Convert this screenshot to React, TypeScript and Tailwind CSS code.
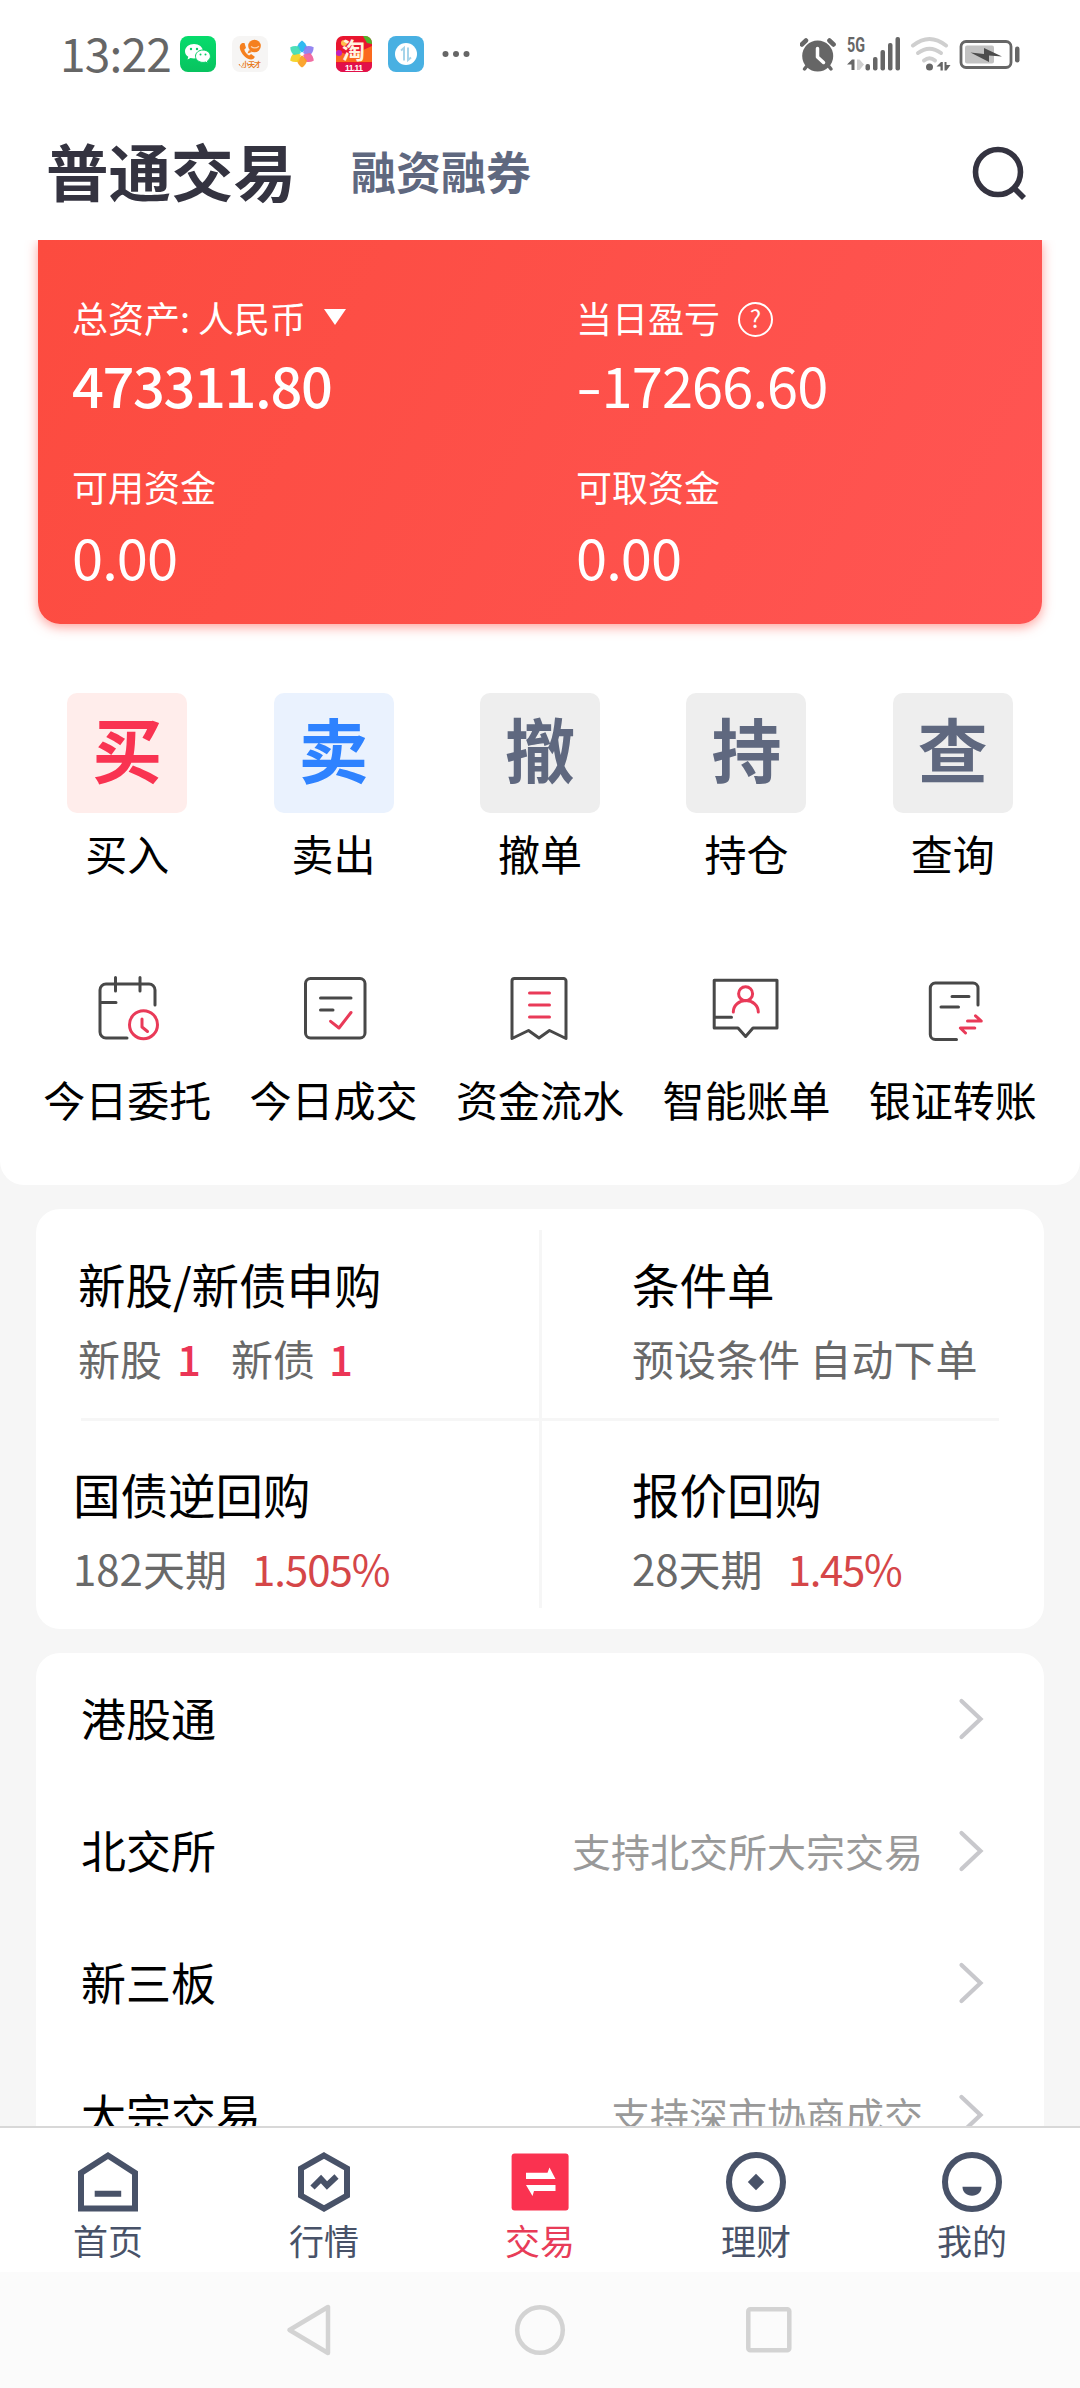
import type { ReactNode } from "react";

function StatusBar() {
  return (
    <div className="flex h-[108px] shrink-0 items-center pl-[60px] pr-[58px] text-[#666666]">
      <span className="mb-[5px] w-[120px] shrink-0 whitespace-nowrap text-[46px] leading-[60px] tracking-[-0.8px]">13:22</span>
      <div className="flex items-center gap-[16px]">
        <svg width="36" height="36" viewBox="0 0 36 36">
          <defs>
            <linearGradient id="wx" x1="0" y1="0" x2="0" y2="1">
              <stop offset="0" stopColor="#06dc6c" />
              <stop offset="1" stopColor="#08c35f" />
            </linearGradient>
          </defs>
          <rect width="36" height="36" rx="8" fill="url(#wx)" />
          <path d="M14 8c-5 0-9 3.200-9 7.200 0 2.300 1.300 4.300 3.300 5.600l-.8 2.600 3-1.500c1 .3 2.200.5 3.500.5 5 0 9-3.200 9-7.200S19 8 14 8z" fill="#fff" />
          <circle cx="11" cy="13" r="1.200" fill="#07cf66" />
          <circle cx="17" cy="13" r="1.200" fill="#07cf66" />
          <path d="M23 14c-4.200 0-7.500 2.800-7.500 6.200s3.300 6.200 7.500 6.200c.9 0 1.800-.1 2.600-.4l2.500 1.300-.7-2.300c1.800-1.100 3-2.800 3-4.800 0-3.400-3.200-6.200-7.400-6.200z" fill="#fff" stroke="#07cf66" strokeWidth="1" />
          <circle cx="20.500" cy="18.500" r="1" fill="#07cf66" />
          <circle cx="25.500" cy="18.500" r="1" fill="#07cf66" />
        </svg>
        <svg width="36" height="36" viewBox="0 0 36 36" className="overflow-visible">
          <rect width="36" height="36" rx="8" fill="#f6f5f4" />
          <path d="M10.500 7c-3 1-3.500 4.500-1.500 8.500s6 8 10 8c2 0 3.500-1.200 3.800-2.700l-3.700-2.800-2 1.500c-2-.8-4.500-3.600-4.800-6l1.700-1.500-1.500-5z" fill="#f5801f" />
          <circle cx="22.500" cy="10" r="6.300" fill="#f5801f" />
          <path d="M17 14l-1.500 3.500L20 16z" fill="#f5801f" />
          <path d="M19 10.500q4 3 8-.3" fill="none" stroke="#fbd3ae" strokeWidth="1.200" />
          <text x="10" y="30.500" fontSize="7" fontWeight="700" fill="#e87a22" textLength="19">小天才</text>
          <path d="M7 28q2 4 5 3" fill="none" stroke="#e87a22" strokeWidth="1" strokeDasharray="2 1" />
        </svg>
        <svg width="36" height="36" viewBox="-18 -18 36 36">
          {[
            ["#1db4f0", 0],
            ["#8b7cf0", 60],
            ["#f0619a", 120],
            ["#fb9d1e", 180],
            ["#f5d020", 240],
            ["#3fdcb4", 300],
          ].map(([c, a]) => (
            <path key={a} d="M0 -1L-5 -6.500Q-4 -11 0 -13.500Q4 -11 5 -6.500Z" fill={c as string} opacity=".92" transform={`rotate(${a})`} />
          ))}
          <circle r="1.800" fill="#fff" />
        </svg>
        <svg width="36" height="36" viewBox="0 0 36 36" className="overflow-visible">
          <defs>
            <clipPath id="tb"><rect width="36" height="36" rx="7" /></clipPath>
          </defs>
          <g clipPath="url(#tb)">
            <rect width="36" height="36" fill="#e9152f" />
            <path d="M0 14L14 20 36 10V26H0z" fill="#fb6a1d" />
            <circle cx="8" cy="7" r="3" fill="#ffc04a" />
            <circle cx="3" cy="17" r="3" fill="#c21fc0" />
            <path d="M27 0h9v8l-5-1z" fill="#4fb52b" />
            <rect y="27" width="36" height="9" fill="#e2104a" />
          </g>
          <text x="6" y="23" fontSize="23" fontWeight="700" fill="#fff3e0">淘</text>
          <text x="9" y="35" fontSize="8.500" fontWeight="700" fontFamily="Liberation Sans" fill="#fff" textLength="18">11.11</text>
        </svg>
        <svg width="36" height="36" viewBox="0 0 36 36">
          <rect width="36" height="36" rx="8" fill="#48b0e2" />
          <circle cx="18" cy="18" r="11" fill="#fff" />
          <path d="M13 14.500l3-2.500v12.500M20 11.500V24l3-2.500" fill="none" stroke="#a5d4ea" strokeWidth="2" />
        </svg>
        <svg width="32" height="36" viewBox="0 0 32 36" fill="#666">
          <circle cx="5.500" cy="18" r="3" />
          <circle cx="16" cy="18" r="3" />
          <circle cx="26.500" cy="18" r="3" />
        </svg>
      </div>
      <div className="ml-auto flex items-center">
        <svg width="36" height="36" viewBox="0 0 36 36" fill="#666">
          <circle cx="17.700" cy="20" r="15.500" />
          <path d="M1.800 8.500L6 4.500M33.600 8.500L29.400 4.500" stroke="#666" strokeWidth="4.500" strokeLinecap="round" />
          <path d="M6.500 30.500L4.500 33M29 30.500L31 33" stroke="#666" strokeWidth="3.500" strokeLinecap="round" />
          <path d="M17.500 12.500V21L23.500 26.500" fill="none" stroke="#fff" strokeWidth="3.500" strokeLinecap="round" strokeLinejoin="round" />
        </svg>
        <svg width="56" height="36" viewBox="0 0 56 36" fill="#666" className="ml-[10px] overflow-visible">
          <text x="1" y="16" fontSize="20" fontWeight="700" fontFamily="Roboto" textLength="18" lengthAdjust="spacingAndGlyphs">5G</text>
          <path d="M1 28.500L6 23.500H8.500V34H5.500V28.500z" />
          <path d="M11 23.500H13.500L18 28.500 13.500 34H11z" fill="#cfcfcf" />
          <rect x="19.500" y="28" width="4.500" height="6.500" rx="2" />
          <rect x="27" y="21" width="4.500" height="13.500" rx="2" />
          <rect x="34.500" y="14" width="4.500" height="20.500" rx="2" />
          <rect x="42" y="7" width="4.500" height="27.500" rx="2" />
          <rect x="49.500" y="1" width="4.500" height="33.500" rx="2" />
        </svg>
        <svg width="42" height="36" viewBox="0 0 42 36" className="ml-[7px]">
          <g fill="none" stroke="#cfcfcf" strokeWidth="4" strokeLinecap="round">
            <path d="M4 9.500Q20.500 -3.500 37 9.500" />
            <path d="M9 17Q20.500 8.500 32 17" />
            <path d="M15 24.500Q20.500 20 26 24.500" />
          </g>
          <circle cx="20.500" cy="31" r="3.500" fill="#666" />
          <path d="M27.500 30.500L32 26H33.800V34.500H31.500V30.500zM35.500 26H37.500V29H41.500L37.500 34.500H35.500z" fill="#666" />
        </svg>
        <svg width="64" height="36" viewBox="0 0 64 36" className="ml-[7px]">
          <rect x="3" y="5.500" width="50" height="26" rx="5" fill="none" stroke="#666" strokeWidth="2.800" />
          <rect x="7" y="9.500" width="29" height="18" rx="2" fill="#c2c2c2" />
          <path d="M12.500 16.500L26 18V12L44 20.500 31 19.500V26z" fill="#4c4c4c" />
          <rect x="57" y="10.500" width="4.500" height="16" rx="2.200" fill="#666" />
        </svg>
      </div>
    </div>
  );
}

function Header() {
  return (
    <header className="flex h-[132px] shrink-0 items-center pb-[8px] pl-[46px] pr-[50px]">
      <h1 className="text-[62.500px] font-bold leading-[80px] text-[#343340]">普通交易</h1>
      <span className="ml-[55px] mt-[2px] text-[45px] font-bold leading-[60px] text-[#5f687f]">融资融券</span>
      <svg width="60" height="60" viewBox="0 0 60 60" className="ml-auto" fill="none" stroke="#343340" strokeWidth="5.600">
        <circle cx="28" cy="32" r="22.500" />
        <path d="M45 49l9 9" />
      </svg>
    </header>
  );
}

function Figure({ label, value, bold, extra }: { label: string; value: ReactNode; bold?: boolean; extra?: ReactNode }) {
  return (
    <div>
      <div className="flex h-[48px] items-center text-[36px] leading-[48px]">
        <span>{label}</span>
        {extra}
      </div>
      <div className={bold ? "text-[56px] font-medium leading-[62px] tracking-[-1.4px]" : "text-[56px] leading-[62px] tracking-[-0.9px]"}>{value}</div>
    </div>
  );
}

function AssetCard() {
  return (
    <section className="h-[420px] shrink-0 overflow-hidden px-[38px]">
      <div className="grid h-[384px] grid-cols-[504px_1fr] grid-rows-[169px_1fr] rounded-b-[22px] bg-linear-[115deg] from-[#fc4b3f] to-[#ff5553] pl-[34px] pt-[53px] text-white shadow-[0_3px_12px_rgba(255,80,70,0.55)]">
        <div className="[&>div]:space-y-[12px]">
          <Figure
            label="总资产: 人民币"
            value="473311.80"
            bold
            extra={
              <svg width="22" height="16" viewBox="0 0 22 16" className="ml-[18px]" fill="#fff">
                <path d="M0 0H22L11 16z" />
              </svg>
            }
          />
        </div>
        <div className="[&>div]:space-y-[12px]">
          <Figure
            label="当日盈亏"
            value={
              <>
                <span className="mr-[7px] inline-block origin-left scale-x-[1.35]">-</span>17266.60
              </>
            }
            extra={
              <span className="ml-[18px] mt-[4px] flex size-[35px] items-center justify-center rounded-full border-2 border-white pb-[2px] text-[24px] leading-[24px]">
                ?
              </span>
            }
          />
        </div>
        <div className="[&>div]:space-y-[15px]">
          <Figure label="可用资金" value="0.00" />
        </div>
        <div className="[&>div]:space-y-[15px]">
          <Figure label="可取资金" value="0.00" />
        </div>
      </div>
    </section>
  );
}

const tiles = [
  { char: "买", label: "买入", tone: "bg-[#ffedeb] text-[#f93351]" },
  { char: "卖", label: "卖出", tone: "bg-[#eaf2fe] text-[#2e82ff]" },
  { char: "撤", label: "撤单", tone: "bg-[#eeeeee] text-[#5f687f]" },
  { char: "持", label: "持仓", tone: "bg-[#eeeeee] text-[#5f687f]" },
  { char: "查", label: "查询", tone: "bg-[#eeeeee] text-[#5f687f]" },
];

const RED = "#e93a58";

const tools: { label: string; icon: ReactNode }[] = [
  {
    label: "今日委托",
    icon: (
      <>
        <path d="M64 32V17a6 6 0 0 0-6-6H15a6 6 0 0 0-6 6V59a6 6 0 0 0 6 6H36M24.500 4.500V18M49 4.500V18M9 29.500H25" />
        <g stroke={RED}>
          <circle cx="52.500" cy="51.700" r="14" />
          <path d="M51 46V54L56.500 58.500" />
        </g>
      </>
    ),
  },
  {
    label: "今日成交",
    icon: (
      <>
        <rect x="7.500" y="5.500" width="59.500" height="59.500" rx="5" />
        <path d="M22.500 25H53M22.500 37H35" />
        <path d="M32.600 48.300L41 55 53 39.500" stroke={RED} />
      </>
    ),
  },
  {
    label: "资金流水",
    icon: (
      <>
        <path d="M8 65.500V8a2.500 2.500 0 0 1 2.500-2.500H59.500A2.500 2.500 0 0 1 62 8V65.500L45.500 57.500 35 65 24.500 57.500z" />
        <path d="M25.500 20H45.500M25.500 32H45.500M25.500 44H45.500" stroke={RED} />
      </>
    ),
  },
  {
    label: "智能账单",
    icon: (
      <>
        <path d="M4.200 7.200H67V55H43L35.600 63.500 28 55H4.200zM4.200 44.300H21.500" />
        <g stroke={RED}>
          <circle cx="35.600" cy="20.700" r="7" />
          <path d="M23.300 39A12.500 11.500 0 0 1 48.300 39" />
        </g>
      </>
    ),
  },
  {
    label: "银证转账",
    icon: (
      <>
        <path d="M61 32V15a5 5 0 0 0-5-5H18.300a5 5 0 0 0-5 5V61.500a5 5 0 0 0 5 5H39.500M35 23.400H52M24 34H41.500" />
        <path d="M50.500 48H64.300L58.500 42.800M57.800 55H43.300L48.500 60" stroke={RED} strokeWidth="3" />
      </>
    ),
  },
];

function Shortcuts() {
  return (
    <section className="shrink-0 px-[24px] pb-[58px] pt-[33px]">
      <div className="grid grid-cols-5">
        {tiles.map((t) => (
          <div key={t.label} className="flex flex-col items-center">
            <div className={`flex size-[120px] justify-center rounded-[10px] text-[70px] font-bold leading-[110px] ${t.tone}`}>{t.char}</div>
            <span className="mt-[12px] text-[42px] leading-[56px]">{t.label}</span>
          </div>
        ))}
      </div>
      <div className="mt-[92px] grid grid-cols-5">
        {tools.map((t) => (
          <div key={t.label} className="flex flex-col items-center">
            <svg width="72" height="72" viewBox="0 0 72 72" fill="none" stroke="#484848" strokeWidth="3" strokeLinecap="round" strokeLinejoin="round">
              {t.icon}
            </svg>
            <span className="mt-[26px] whitespace-nowrap text-[42px] leading-[56px]">{t.label}</span>
          </div>
        ))}
      </div>
    </section>
  );
}

function Feature({ title, children, className }: { title: string; children: ReactNode; className: string }) {
  return (
    <div className={className}>
      <div className="text-[47.500px] leading-[60px]">{title}</div>
      <div className="mt-[16px] flex text-[42px] leading-[56px] text-[#696969]">{children}</div>
    </div>
  );
}

function FeatureCard() {
  return (
    <section className="mx-[36px] mt-[24px] flex h-[420px] shrink-0 rounded-[24px] bg-white">
      <div className="flex w-[503px] flex-col">
        <Feature title="新股/新债申购" className="h-[209px] pl-[42px] pt-[45px]">
          <span>新股</span>
          <span className="ml-[15px] font-medium text-[#eb3556]">1</span>
          <span className="ml-[30px]">新债</span>
          <span className="ml-[14px] font-medium text-[#eb3556]">1</span>
        </Feature>
        <div className="ml-[45px] h-[3px] bg-[#f6f6f6]" />
        <Feature title="国债逆回购" className="pl-[37px] pt-[43px]">
          <span>182天期</span>
          <span className="ml-[25px] tracking-[-1px] text-[#d54648]">1.505%</span>
        </Feature>
      </div>
      <div className="mt-[21px] h-[378px] w-[3px] bg-[#f6f6f6]" />
      <div className="flex w-[502px] flex-col">
        <Feature title="条件单" className="h-[209px] pl-[90px] pt-[45px]">
          <span className="whitespace-nowrap">预设条件 自动下单</span>
        </Feature>
        <div className="mr-[45px] h-[3px] bg-[#f6f6f6]" />
        <Feature title="报价回购" className="pl-[90px] pt-[43px]">
          <span>28天期</span>
          <span className="ml-[25px] tracking-[-1.300px] text-[#d54648]">1.45%</span>
        </Feature>
      </div>
    </section>
  );
}

const rows = [
  { label: "港股通", hint: "" },
  { label: "北交所", hint: "支持北交所大宗交易" },
  { label: "新三板", hint: "" },
  { label: "大宗交易", hint: "支持深市协商成交" },
];

function MarketList() {
  return (
    <section className="mx-[36px] mt-[24px] shrink-0 rounded-t-[24px] bg-white">
      {rows.map((r) => (
        <div key={r.label} className="flex h-[132px] items-center pl-[45px] pr-[59px]">
          <span className="mb-[2px] text-[45px] leading-[60px]">{r.label}</span>
          <span className="mb-[3px] ml-auto text-[39px] leading-[56px] text-[#999999]">{r.hint}</span>
          <svg width="28" height="44" viewBox="0 0 28 44" className="ml-[34px]" fill="none" stroke="#c8c8cc" strokeWidth="4.200" strokeLinecap="round">
            <path d="M4.500 4L23.500 22 4.500 40" />
          </svg>
        </div>
      ))}
    </section>
  );
}

const tabs: { label: string; active?: boolean; icon: ReactNode }[] = [
  {
    label: "首页",
    icon: <path d="M5 58.500V23L32 5.500 59 23V58.500zM18.700 43.700H45.200" />,
  },
  {
    label: "行情",
    icon: (
      <>
        <path d="M32 5.500L55 18.500V45.500L32 58.500 9 45.500V18.500z" />
        <path d="M20.500 37.500L29 29 35 35.500 44.500 26.500" strokeWidth="6" />
      </>
    ),
  },
  {
    label: "交易",
    active: true,
    icon: (
      <g stroke="none">
        <rect x="3.600" y="3.500" width="57" height="57" rx="3" fill="#fa3250" />
        <path d="M18 22.700H39.500L41.500 17.500 47.500 29H18zM18 35H47.500V41H26L24.500 46z" fill="#fff" />
      </g>
    ),
  },
  {
    label: "理财",
    icon: (
      <>
        <circle cx="32" cy="32" r="27" />
        <path d="M32 23.800L40.200 32 32 40.200 23.800 32z" fill="#485268" stroke="none" />
      </>
    ),
  },
  {
    label: "我的",
    icon: (
      <>
        <circle cx="32" cy="32" r="27" />
        <path d="M22.500 36.700H41.500C41.500 42 37.500 45.700 32 45.700S22.500 42 22.500 36.700z" fill="#485268" stroke="none" />
      </>
    ),
  },
];

function TabBar() {
  return (
    <nav className="grid h-[146px] shrink-0 grid-cols-5 border-t-2 border-[#d8d8d8] bg-white pt-[22px]">
      {tabs.map((t) => (
        <div key={t.label} className="flex flex-col items-center">
          <svg width="64" height="64" viewBox="0 0 64 64" fill="none" stroke="#485268" strokeWidth="6" className="shrink-0">
            {t.icon}
          </svg>
          <span className={t.active ? "mt-[4px] text-[35px] leading-[44px] text-[#e83c58]" : "mt-[4px] text-[35px] leading-[44px] text-[#485268]"}>{t.label}</span>
        </div>
      ))}
    </nav>
  );
}

function SystemBar() {
  return (
    <div className="flex h-[116px] shrink-0 items-center justify-center gap-[172px] bg-[#fbfbfb]">
      <svg width="56" height="56" viewBox="0 0 56 56" fill="none" stroke="#d3d3d3" strokeWidth="4.500" strokeLinejoin="round">
        <path d="M5.500 28L44 5V51z" />
      </svg>
      <svg width="56" height="56" viewBox="0 0 56 56" fill="none" stroke="#d3d3d3" strokeWidth="4.500">
        <circle cx="28" cy="28" r="22.800" />
      </svg>
      <svg width="56" height="56" viewBox="0 0 56 56" fill="none" stroke="#d3d3d3" strokeWidth="4.500">
        <rect x="8.300" y="7.300" width="41" height="41" rx="2" />
      </svg>
    </div>
  );
}

export default function App() {
  return (
    <div className="flex h-[2388px] w-[1080px] flex-col overflow-hidden bg-[#f6f6f6] font-['Noto_Sans_CJK_SC',sans-serif] text-black">
      <main className="flex h-[2126px] shrink-0 flex-col overflow-hidden">
        <div className="flex h-[1185px] shrink-0 flex-col rounded-b-[24px] bg-white">
          <StatusBar />
          <Header />
          <AssetCard />
          <Shortcuts />
        </div>
        <FeatureCard />
        <MarketList />
      </main>
      <TabBar />
      <SystemBar />
    </div>
  );
}
